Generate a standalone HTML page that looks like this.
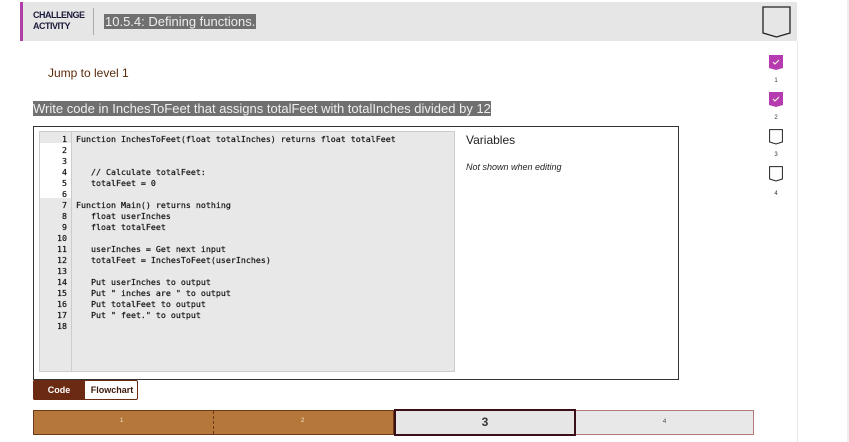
<!DOCTYPE html>
<html><head><style>
body{margin:0;width:849px;height:442px;background:#fff;position:relative;overflow:hidden;font-family:"Liberation Sans",sans-serif}
.a{position:absolute}
.code{font-family:"DejaVu Sans Mono","Liberation Mono",monospace;font-size:8.3px;line-height:11px;color:#111;white-space:pre;-webkit-text-stroke:0.2px #111}
</style></head><body>
<div class="a" style="left:20px;top:2px;width:777px;height:39px;background:#e6e6e6"></div>
<div class="a" style="left:20px;top:2px;width:3px;height:39px;background:#b03ea8"></div>
<div class="a" style="left:33px;top:10px;font-size:9px;font-weight:bold;line-height:11px;color:#1a1a3a;letter-spacing:-0.5px">CHALLENGE<br>ACTIVITY</div>
<div class="a" style="left:93px;top:8px;width:1px;height:27px;background:#aaa"></div>
<div class="a" style="left:104px;top:14px;background:#707070;color:#eee;font-size:13px;line-height:15px;padding:0 1px">10.5.4: Defining functions.</div>
<div class="a" style="left:797px;top:41px;width:1px;height:401px;background:#e8e8e8"></div>
<div class="a" style="left:847px;top:0;width:2px;height:442px;background:#eee"></div>
<svg class="a" style="left:762px;top:6px" width="30" height="32"><path d="M1 1H28V27L14.5 31L1 27Z" fill="none" stroke="#222" stroke-width="1.3"/></svg>
<svg class="a" style="left:769px;top:55px" width="15" height="150" font-family="Liberation Sans"><path d="M0 0H14V13L7 15L0 13Z" fill="#b63bb0"/><path d="M4 7l2 2 4-4" stroke="#ffd" fill="none"/><text x="7" y="27" font-size="6" text-anchor="middle" fill="#333">1</text><path d="M0 37H14V50L7 52L0 50Z" fill="#b63bb0"/><path d="M4 44l2 2 4-4" stroke="#ffd" fill="none"/><text x="7" y="64" font-size="6" text-anchor="middle" fill="#333">2</text>
<path d="M.6 74.6H13.4V87L7 89L.6 87Z" fill="none" stroke="#222"/><text x="7" y="101" font-size="6" text-anchor="middle" fill="#333">3</text><path d="M.6 111.6H13.4V124L7 126L.6 124Z" fill="none" stroke="#222"/><text x="7" y="140" font-size="6" text-anchor="middle" fill="#333">4</text></svg>
<div class="a" style="left:48px;top:66px;font-size:12px;color:#5a2a0a">Jump to level 1</div>
<div class="a" style="left:33px;top:101px;background:#707070;color:#eee;font-size:13px;line-height:15px">Write code in InchesToFeet that assigns totalFeet with totalInches divided by 12</div>
<div class="a" style="left:33px;top:126px;width:644px;height:252px;border:1.3px solid #333"></div>
<div class="a" style="left:39px;top:131px;width:416px;height:241px;background:#e8e8e8;border:1px solid #ccc;box-sizing:border-box"></div>
<div class="a" style="left:40px;top:143px;width:31px;height:55px;background:#fff"></div>
<div class="a" style="left:71px;top:131px;width:1px;height:241px;background:#ccc"></div>
<div class="a code" style="left:40px;top:134px;width:27px;text-align:right">1
2
3
4
5
6
7
8
9
10
11
12
13
14
15
16
17
18</div>
<div class="a code" style="left:76px;top:134px">Function InchesToFeet(float totalInches) returns float totalFeet


   // Calculate totalFeet:
   totalFeet = 0

Function Main() returns nothing
   float userInches
   float totalFeet

   userInches = Get next input
   totalFeet = InchesToFeet(userInches)

   Put userInches to output
   Put " inches are " to output
   Put totalFeet to output
   Put " feet." to output</div>
<div class="a" style="left:466px;top:133px;font-size:12px;color:#222">Variables</div>
<div class="a" style="left:466px;top:162px;font-size:9px;font-style:italic;color:#222">Not shown when editing</div>
<div class="a" style="left:33px;top:380px;width:105px;height:20px;border:1px solid #6b2a12;border-radius:2px;box-sizing:border-box;background:#fff"></div>
<div class="a" style="left:33px;top:380px;width:52px;height:20px;background:#6b2a12;border-radius:2px 0 0 2px;color:#fff;font-size:9px;font-weight:bold;text-align:center;line-height:20px">Code</div>
<div class="a" style="left:86px;top:380px;width:52px;height:20px;font-size:9px;font-weight:bold;text-align:center;line-height:20px;color:#3a1a0a">Flowchart</div>
<div class="a" style="left:33px;top:410px;width:361px;height:25px;background:#b5773a;border:1px solid #6b3a1a;box-sizing:border-box"></div>
<div class="a" style="left:213px;top:411px;height:23px;border-left:1px dashed #6b3a1a"></div>
<div class="a" style="left:120px;top:418px;font-size:6px;color:#f5e6d0">1</div>
<div class="a" style="left:301px;top:418px;font-size:6px;color:#f5e6d0">2</div>
<div class="a" style="left:394px;top:409px;width:182px;height:27px;background:#e6e6e6;border:2px solid #3a0f18;box-sizing:border-box;text-align:center;font-size:12px;font-weight:bold;line-height:23px;color:#333">3</div>
<div class="a" style="left:576px;top:410px;width:178px;height:25px;background:#e8e8e8;border:1px solid #b07a7a;border-left:none;box-sizing:border-box;text-align:center;font-size:6px;line-height:23px;color:#444">4</div>
</body></html>
